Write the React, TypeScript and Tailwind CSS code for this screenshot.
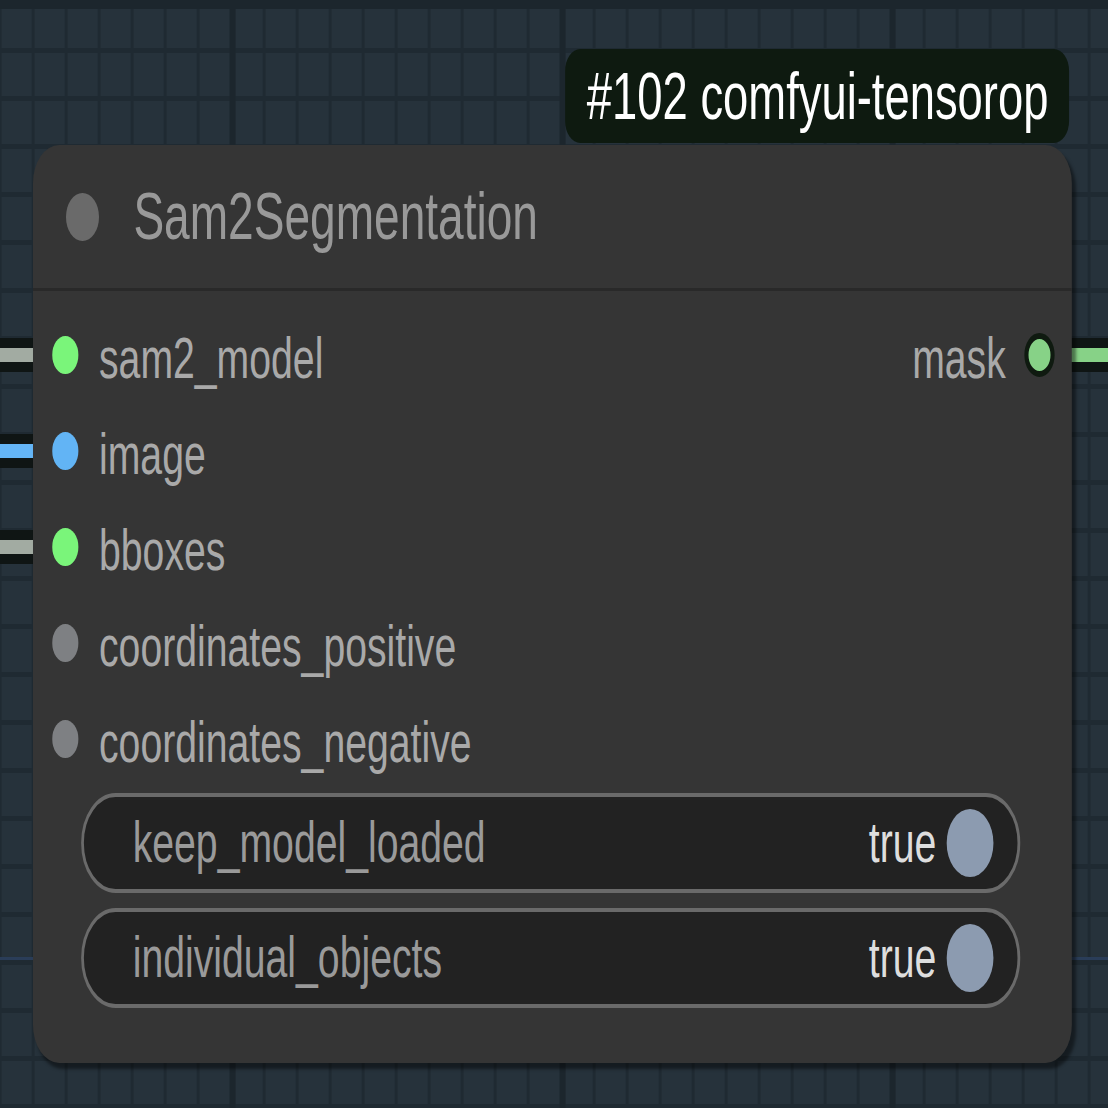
import { FC } from "react"

const font = "font-['Liberation_Sans',Arial,sans-serif]"

type Slot = { name: string; dot: string }

const inputs: Slot[] = [
    { name: "sam2_model", dot: "bg-[#7af57a]" },
    { name: "image", dot: "bg-[#62b4f5]" },
    { name: "bboxes", dot: "bg-[#7af57a]" },
    { name: "coordinates_positive", dot: "bg-[#7e8083]" },
    { name: "coordinates_negative", dot: "bg-[#7e8083]" },
]

const toggles = ["keep_model_loaded", "individual_objects"]

// a link wire entering or leaving the node, drawn on the canvas behind it
const Wire: FC<{ className: string; inner: string }> = ({ className, inner }) => (
    <div className={`absolute h-[34px] bg-[#0f1514] flex items-center ${className}`}>
        <div className={`w-full h-[14px] ${inner}`} />
    </div>
)

const Toggle: FC<{ label: string }> = ({ label }) => (
    <div className="ml-[70px] w-[1366px] h-[100px] rounded-full border-[4px] border-[#6a6a6a] bg-[#222222] flex items-center pl-[71px] pr-[35px]">
        <span className="flex-1 text-[57px] text-[#9a9a9a]">{label}</span>
        <span className="text-[57px] text-[#dedede]">true</span>
        <span className="ml-[15px] w-[68px] h-[68px] rounded-full bg-[#8c9bb0]" />
    </div>
)

export default function App() {
    return (
        <div className={`w-[1108px] h-[1108px] overflow-hidden bg-[#26323b] ${font}`}>
            {/* the screenshot is squeezed horizontally, so the canvas is laid out wide and scaled */}
            <div className="relative w-[1612px] h-[1108px] origin-top-left scale-x-[0.6875] bg-[linear-gradient(90deg,#1c262d_9px,transparent_9px),linear-gradient(90deg,#1f2a32_5px,transparent_5px),linear-gradient(#1f2a32_5px,transparent_5px)] bg-[size:480px_100%,48px_48px,48px_48px] bg-[position:334px_0,46px_0,0_0]">
                <div className="absolute left-0 right-0 top-0 h-[9px] bg-[#1c262d]" />
                <div className="absolute left-0 right-0 top-[957px] h-[3px] bg-[#2a3d58]" />

                <Wire className="left-0 w-[90px] top-[338px]" inner="bg-[#a2aba2]" />
                <Wire className="left-0 w-[90px] top-[434px]" inner="bg-[#64b5f6]" />
                <Wire className="left-0 w-[90px] top-[530px]" inner="bg-[#a2aba2]" />
                <Wire className="left-[1520px] right-0 top-[338px]" inner="bg-[#87d287]" />

                <div className="absolute left-[48px] top-[145px] w-[1511px] h-[918px] rounded-[38px] bg-[#353535] shadow-[5px_6px_4px_rgba(0,0,0,0.45)]">
                    <div className="absolute right-[4px] bottom-[920px] h-[94px] rounded-[22px] bg-[#0e1a10] flex items-center pl-[32px] pr-[30px]">
                        <span className="text-[66px] text-white whitespace-nowrap">#102 comfyui-tensorop</span>
                    </div>

                    <div className="h-[146px] border-b-[3px] border-[#292929] flex items-center pl-[48px] gap-[50px]">
                        <span className="w-[48px] h-[48px] rounded-full bg-[#6a6a6a]" />
                        <span className="text-[67px] text-[#999999]">Sam2Segmentation</span>
                    </div>

                    <div className="pt-[16px]">
                        {inputs.map((s, i) => (
                            <div key={s.name} className="h-[96px] flex items-center pl-[28px] pr-[25px]">
                                <span className={`w-[38px] h-[38px] rounded-full ${s.dot}`} />
                                <span className="ml-[30px] pt-[8px] flex-1 text-[57px] text-[#a9a9a9]">{s.name}</span>
                                {i === 0 && (
                                    <>
                                        <span className="pt-[8px] text-[57px] text-[#a9a9a9]">mask</span>
                                        <span className="ml-[27px] w-[44px] h-[44px] rounded-full border-[6px] border-[#0f1a10] bg-[#87d287]" />
                                    </>
                                )}
                            </div>
                        ))}
                    </div>

                    <div className="mt-[6px] flex flex-col gap-[15px]">
                        {toggles.map(t => (
                            <Toggle key={t} label={t} />
                        ))}
                    </div>
                </div>
            </div>
        </div>
    )
}
